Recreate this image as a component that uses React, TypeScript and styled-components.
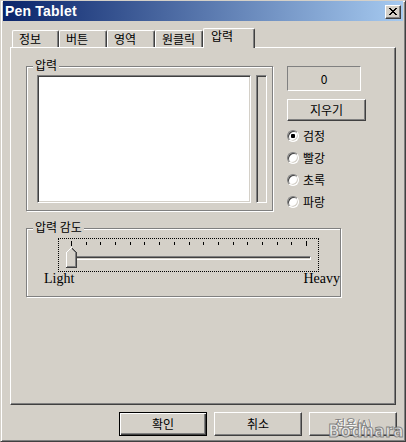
import React from 'react';
import styled, { createGlobalStyle, css } from 'styled-components';

const FACE = '#d4d0c8';
const SHADOW = '#808080';
const DARK = '#404040';
const HILITE = '#ffffff';

const GlobalStyle = createGlobalStyle`
  html, body { margin: 0; padding: 0; background: ${FACE}; }
  body {
    font-family: "Noto Sans CJK KR", "Noto Sans", sans-serif;
    font-size: 12px;
    color: #000;
  }
`;

const Window = styled.div`
  position: relative;
  box-sizing: border-box;
  width: 406px;
  height: 442px;
  display: flex;
  flex-direction: column;
  background: ${FACE};
  border: 1px solid;
  border-color: ${FACE} ${DARK} ${DARK} ${FACE};
  box-shadow: inset 1px 1px 0 ${HILITE}, inset -1px -1px 0 ${SHADOW};
  padding: 0 2px 5px 2px;
  overflow: hidden;
`;

const TitleBar = styled.div`
  flex: none;
  height: 20px;
  display: flex;
  align-items: center;
  padding-left: 2px;
  background: linear-gradient(to right, #0a246a, #a6caf0);
  color: #fff;
  font-family: "Liberation Sans", Arial, sans-serif;
  font-weight: bold;
  font-size: 14px;
  letter-spacing: 0.2px;
  line-height: 20px;
`;

const TitleText = styled.span`
  flex: 1;
  white-space: nowrap;
`;

const raised = css`
  border: 1px solid;
  border-color: ${HILITE} ${DARK} ${DARK} ${HILITE};
  box-shadow: inset -1px -1px 0 ${SHADOW};
  background: ${FACE};
`;

const sunken = css`
  border: 1px solid;
  border-color: ${SHADOW} ${HILITE} ${HILITE} ${SHADOW};
  box-shadow: inset 1px 1px 0 ${DARK}, inset -1px -1px 0 ${FACE};
`;

const CloseButton = styled.div`
  ${raised};
  box-sizing: border-box;
  width: 16px;
  height: 14px;
  margin: 2px 2px 0 0;
  display: flex;
  align-items: center;
  justify-content: center;
  padding-bottom: 1px;
`;

const TabRow = styled.div`
  flex: none;
  position: relative;
  z-index: 1;
  display: flex;
  align-items: flex-end;
  height: 20px;
  margin: 7px 0 -1px 9px;
`;

const Tab = styled.div<{ $active?: boolean; $w: number }>`
  box-sizing: border-box;
  width: ${(p) => p.$w}px;
  height: ${(p) => (p.$active ? 20 : 17)}px;
  margin-bottom: ${(p) => (p.$active ? 0 : 1)}px;
  padding: ${(p) => (p.$active ? '0 0 0 7px' : '1px 0 0 6px')};
  border-top: 1px solid ${HILITE};
  border-left: 1px solid ${HILITE};
  border-right: 1px solid ${DARK};
  border-top-left-radius: 2px;
  border-top-right-radius: 2px;
  box-shadow: inset -1px 0 0 ${SHADOW};
  background: ${FACE};
  line-height: 14px;
  white-space: nowrap;
`;

const Panel = styled.div`
  flex: 1;
  margin: 0 7px;
  border: 1px solid;
  border-color: ${HILITE} ${DARK} ${DARK} ${HILITE};
  box-shadow: inset -1px -1px 0 ${SHADOW};
  padding: 18px 0 0 15px;
  display: flex;
  flex-direction: column;
  align-items: flex-start;
`;

const Row = styled.div`
  display: flex;
  align-items: flex-start;
`;

const GroupBox = styled.div<{ $gap?: number }>`
  position: relative;
  margin-top: ${(p) => p.$gap ?? 0}px;
  border: 1px solid ${SHADOW};
  box-shadow: inset 1px 1px 0 ${HILITE}, 1px 1px 0 ${HILITE};
`;

const Legend = styled.span`
  position: absolute;
  top: -9px;
  left: 6px;
  padding: 0 2px;
  background: ${FACE};
  line-height: 14px;
  white-space: nowrap;
`;

const DrawArea = styled.div`
  display: flex;
  gap: 5px;
  padding: 8px 5px 7px 10px;
`;

const Canvas = styled.div`
  ${sunken};
  box-sizing: border-box;
  width: 214px;
  height: 128px;
  background: #fff;
`;

const LevelBar = styled.div`
  ${sunken};
  box-sizing: border-box;
  width: 11px;
  height: 128px;
  background: ${FACE};
`;

const RightColumn = styled.div`
  display: flex;
  flex-direction: column;
  margin-left: 14px;
`;

const ValueBox = styled.div`
  box-sizing: border-box;
  width: 74px;
  height: 25px;
  border: 1px solid;
  border-color: ${SHADOW} ${HILITE} ${HILITE} ${SHADOW};
  display: flex;
  align-items: center;
  justify-content: center;
  line-height: 14px;
  padding-top: 1px;
`;

const PushButton = styled.div<{ $w: number; $h: number; $default?: boolean; $disabled?: boolean }>`
  box-sizing: border-box;
  width: ${(p) => p.$w}px;
  height: ${(p) => p.$h}px;
  display: flex;
  align-items: center;
  justify-content: center;
  line-height: 14px;
  padding-bottom: 1px;
  background: ${FACE};
  white-space: nowrap;
  ${(p) =>
    p.$default
      ? css`
          border: 1px solid #000;
          box-shadow: inset 1px 1px 0 ${HILITE}, inset -1px -1px 0 ${DARK}, inset -2px -2px 0 ${SHADOW};
        `
      : raised};
  ${(p) =>
    p.$disabled &&
    css`
      color: ${SHADOW};
      text-shadow: 1px 1px 0 ${HILITE};
    `}
`;

const RadioList = styled.div`
  display: flex;
  flex-direction: column;
  margin-top: 4px;
`;

const RadioRow = styled.div`
  height: 22px;
  display: flex;
  align-items: center;
  gap: 4px;
  line-height: 14px;
`;

const RadioCircle = styled.span<{ $checked?: boolean }>`
  position: relative;
  box-sizing: border-box;
  width: 12px;
  height: 12px;
  border-radius: 50%;
  border: 1px solid;
  border-color: ${SHADOW} ${HILITE} ${HILITE} ${SHADOW};
  background: #fff;
  box-shadow: inset 1px 1px 0 ${DARK}, inset -1px -1px 0 ${FACE};
  ${(p) =>
    p.$checked &&
    css`
      &::after {
        content: '';
        position: absolute;
        left: 3px;
        top: 3px;
        width: 4px;
        height: 4px;
        border-radius: 1px;
        background: #000;
      }
    `}
`;

const SliderGroupBody = styled.div`
  padding: 9px 0 10px 17px;
  width: 296px;
`;

const FocusRect = styled.div`
  position: relative;
  box-sizing: border-box;
  margin-left: 14px;
  width: 261px;
  height: 34px;
  border: 1px dotted #000;
`;

const TickSvg = styled.svg`
  display: block;
  margin-top: 2px;
`;

const Track = styled.div`
  ${sunken};
  box-sizing: border-box;
  margin: 10px 0 0 11px;
  width: 241px;
  height: 4px;
`;

const ThumbSvg = styled.svg`
  position: absolute;
  left: 7px;
  top: 8px;
`;

const LabelRow = styled.div`
  display: flex;
  justify-content: space-between;
  font-family: "Liberation Serif", "Times New Roman", serif;
  font-size: 14px;
  line-height: 14px;
`;

const ButtonRow = styled.div`
  flex: none;
  display: flex;
  justify-content: flex-end;
  gap: 7px;
  margin-top: 7px;
  padding-right: 6px;
`;

const Watermark = styled.div`
  position: absolute;
  right: 1px;
  bottom: 0;
  font-family: "DejaVu Sans Condensed", "DejaVu Sans", sans-serif;
  font-weight: bold;
  font-size: 17px;
  line-height: 19px;
  letter-spacing: 0.5px;
  color: rgba(235, 235, 235, 0.85);
  -webkit-text-stroke: 1px rgba(110, 110, 110, 0.8);
  pointer-events: none;
`;

const CloseIcon = () => (
  <svg width="8" height="7" viewBox="0 0 8 7" shapeRendering="crispEdges">
    <path
      fill="#000"
      d="M0 0h2v1H0zM6 0h2v1H6zM1 1h2v1H1zM5 1h2v1H5zM2 2h4v1H2zM3 3h2v1H3zM2 4h4v1H2zM1 5h2v1H1zM5 5h2v1H5zM0 6h2v1H0zM6 6h2v1H6z"
    />
  </svg>
);

const Ticks = () => {
  const items = [];
  for (let i = 0; i <= 16; i++) {
    const x = Math.round(12 + i * (235 / 16));
    const edge = i === 0 || i === 16;
    items.push(<rect key={i} x={x} y={edge ? 0 : 1} width={1} height={edge ? 5 : 3} fill="#000" />);
  }
  return (
    <TickSvg width="259" height="5" viewBox="0 0 259 5" shapeRendering="crispEdges">
      {items}
    </TickSvg>
  );
};

const Thumb = () => {
  const rects: React.ReactNode[] = [];
  for (let r = 0; r <= 20; r++) {
    const l = r <= 5 ? 5 - r : 0;
    const rt = r <= 5 ? 5 + r : 10;
    rects.push(<rect key={`f${r}`} x={l} y={r} width={rt - l + 1} height={1} fill={FACE} />);
    if (r === 20) {
      rects.push(<rect key="b20" x={0} y={20} width={11} height={1} fill={DARK} />);
      continue;
    }
    if (r === 19) rects.push(<rect key="s19" x={1} y={19} width={9} height={1} fill={SHADOW} />);
    else if (r >= 2) rects.push(<rect key={`s${r}`} x={rt - 1} y={r} width={1} height={1} fill={SHADOW} />);
    rects.push(<rect key={`w${r}`} x={l} y={r} width={1} height={1} fill={HILITE} />);
    if (r >= 1) rects.push(<rect key={`d${r}`} x={rt} y={r} width={1} height={1} fill={DARK} />);
  }
  return (
    <ThumbSvg width="11" height="21" viewBox="0 0 11 21" shapeRendering="crispEdges">
      {rects}
    </ThumbSvg>
  );
};

const tabs = [
  { label: '정보', w: 47 },
  { label: '버튼', w: 48 },
  { label: '영역', w: 48 },
  { label: '원클릭', w: 48 },
  { label: '압력', w: 52, active: true },
];

const colors = [
  { label: '검정', checked: true },
  { label: '빨강' },
  { label: '초록' },
  { label: '파랑' },
];

export default function App() {
  return (
    <>
      <GlobalStyle />
      <Window>
        <TitleBar>
          <TitleText>Pen Tablet</TitleText>
          <CloseButton>
            <CloseIcon />
          </CloseButton>
        </TitleBar>

        <TabRow>
          {tabs.map((t) => (
            <Tab key={t.label} $w={t.w} $active={t.active}>
              {t.label}
            </Tab>
          ))}
        </TabRow>

        <Panel>
          <Row>
            <GroupBox>
              <Legend>압력</Legend>
              <DrawArea>
                <Canvas />
                <LevelBar />
              </DrawArea>
            </GroupBox>
            <RightColumn>
              <ValueBox>0</ValueBox>
              <PushButton $w={79} $h={22} style={{ marginTop: 8 }}>
                지우기
              </PushButton>
              <RadioList>
                {colors.map((c) => (
                  <RadioRow key={c.label}>
                    <RadioCircle $checked={c.checked} />
                    <span>{c.label}</span>
                  </RadioRow>
                ))}
              </RadioList>
            </RightColumn>
          </Row>

          <GroupBox $gap={15}>
            <Legend>압력 감도</Legend>
            <SliderGroupBody>
              <FocusRect>
                <Ticks />
                <Track />
                <Thumb />
              </FocusRect>
              <LabelRow>
                <span>Light</span>
                <span>Heavy</span>
              </LabelRow>
            </SliderGroupBody>
          </GroupBox>
        </Panel>

        <ButtonRow>
          <PushButton $w={88} $h={24} $default>
            확인
          </PushButton>
          <PushButton $w={88} $h={24}>
            취소
          </PushButton>
          <PushButton $w={88} $h={24} $disabled>
            적용(A)
          </PushButton>
        </ButtonRow>

        <Watermark>Bodnara</Watermark>
      </Window>
    </>
  );
}
